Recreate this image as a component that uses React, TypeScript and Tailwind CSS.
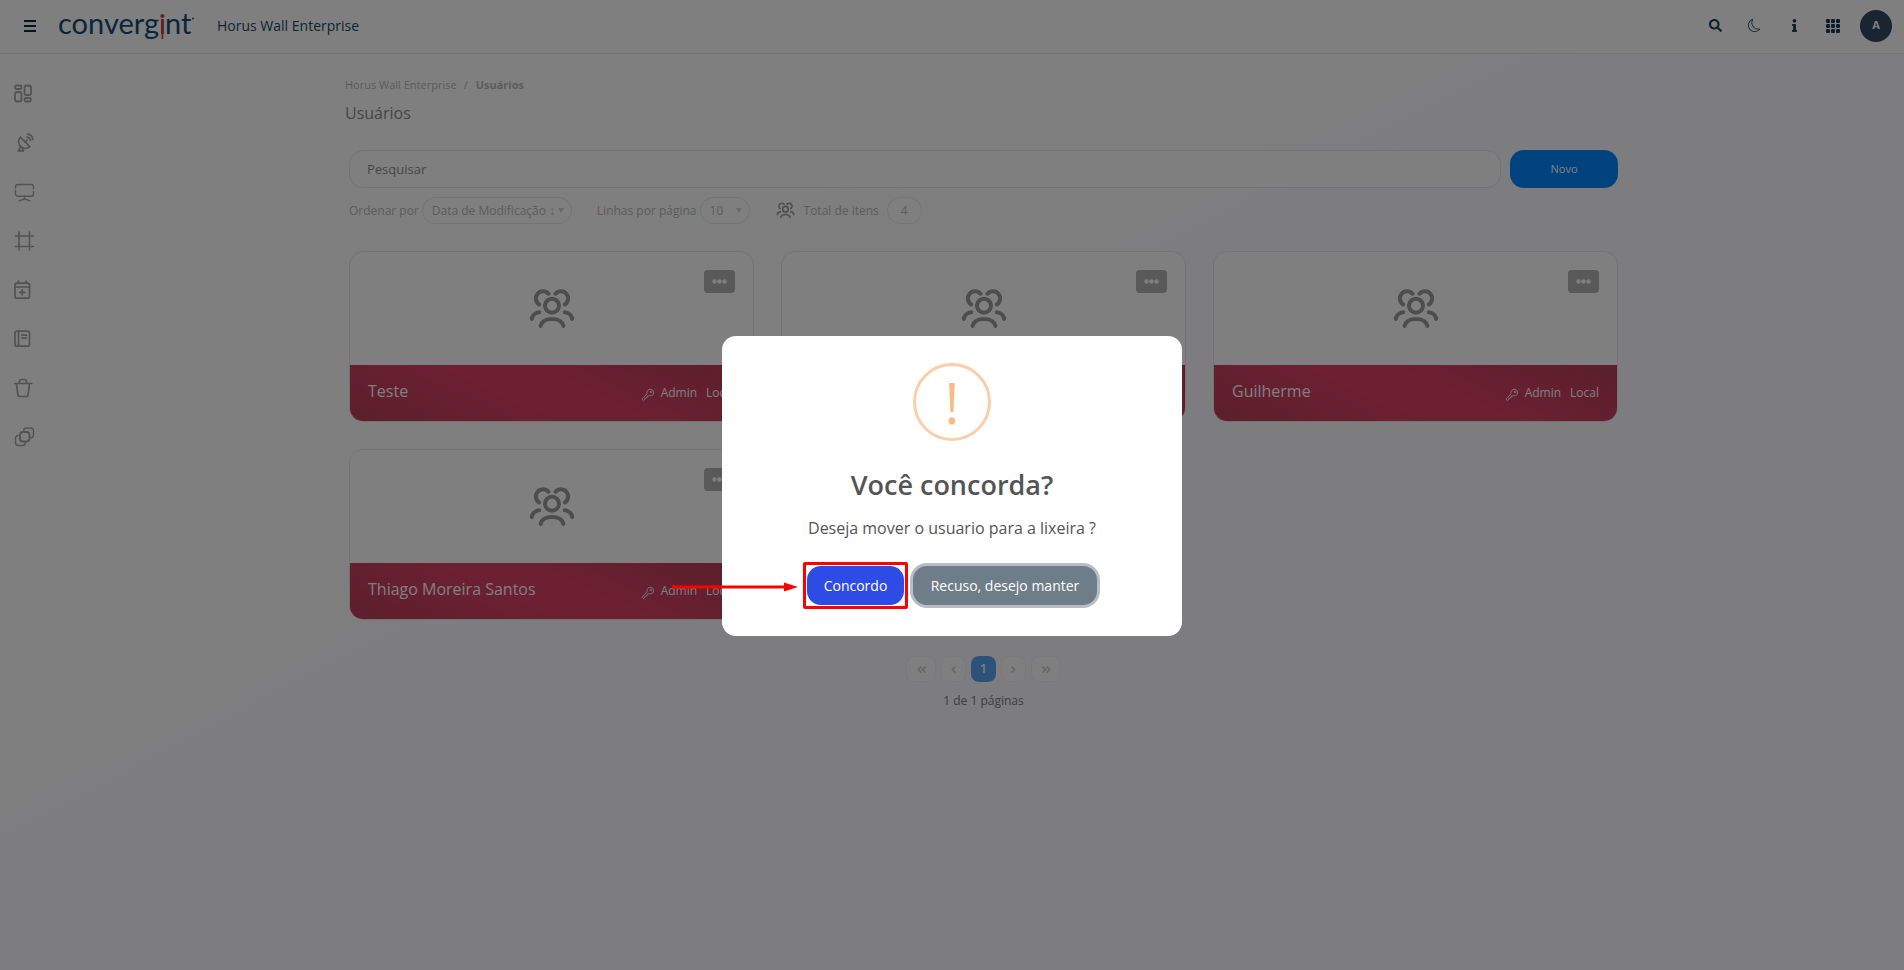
import React from 'react';
import { FaSearch, FaInfo, FaAngleDoubleLeft, FaAngleDoubleRight, FaAngleLeft, FaAngleRight } from 'react-icons/fa';
import { BsMoon, BsFillGrid3X3GapFill } from 'react-icons/bs';
import { IoKeyOutline } from 'react-icons/io5';

interface User {
  name: string;
  role: string;
  origin: string;
}

const users: User[] = [
  { name: 'Teste', role: 'Admin', origin: 'Local' },
  { name: 'Administrador', role: 'Admin', origin: 'Local' },
  { name: 'Guilherme', role: 'Admin', origin: 'Local' },
  { name: 'Thiago Moreira Santos', role: 'Admin', origin: 'Local' },
];

const menu = [
  {
    label: 'Dashboard',
    icon: (
      <g strokeWidth="1.8">
        <rect x="1" y="1.5" width="6.5" height="3.5" rx="1.5" />
        <rect x="1" y="8" width="6.5" height="9.5" rx="2" />
        <rect x="10.5" y="1.5" width="6.5" height="9.5" rx="2" />
        <rect x="10.5" y="14" width="6.5" height="3.5" rx="1.5" />
      </g>
    ),
  },
  {
    label: 'Fontes',
    icon: (
      <g strokeWidth="1.7">
        <path d="M6.3 4.2C3.8 7 4.2 11 6.7 13.4c2.5 2.4 6.4 2.6 9.2.2z" />
        <path d="M11 9l2-2M6.5 13.5L4.8 17.8M4 17.8h5.5M8 14.5l1.5 3" />
        <path d="M13.2 4.2c1.7.3 2.8 1.4 3.1 3.1M13.5 1.2c3 .3 5 2.4 5.3 5.3" />
      </g>
    ),
  },
  {
    label: 'Telas',
    icon: (
      <g strokeWidth="1.4">
        <path d="M1.5 6V5q0-2.5 2.5-2.5h13q2.5 0 2.5 2.5v2M19.5 9.5v2.2q0 2.5-2.5 2.5H4q-2.5 0-2.5-2.5V8.5" />
        <path d="M10.5 14.2v2.5M5 18.8l5.5-2 5.5 2" />
      </g>
    ),
  },
  {
    label: 'Layouts',
    icon: <path strokeWidth="1.6" d="M5 1v18M15.5 1v18M1.5 5h18M1.5 15.5h18" />,
  },
  {
    label: 'Agenda',
    icon: (
      <g strokeWidth="1.7">
        <rect x="1" y="3.2" width="14.5" height="15" rx="2" />
        <path d="M1 7h14.5M4.5 1v2M12 1v2M8.2 9.8v5M5.7 12.3h5" />
      </g>
    ),
  },
  {
    label: 'Registros',
    icon: (
      <g strokeWidth="1.7">
        <rect x="1" y="2.2" width="14.5" height="15" rx="2" />
        <path d="M4.5 2.2v15M8 6.2h4.5M8 9.2h4.5" />
      </g>
    ),
  },
  {
    label: 'Lixeira',
    icon: (
      <g strokeWidth="1.7">
        <path d="M0.8 5.5h17M2.5 5.5l1.3 11q.3 2 2.2 2h6q1.9 0 2.2-2l1.3-11" />
        <path d="M5.5 5V3.5Q5.5 1.5 7.5 1.5h3q2 0 2 2V5" />
      </g>
    ),
  },
  {
    label: 'Grupos',
    icon: (
      <g strokeWidth="1.4">
        <rect x="6" y="5" width="9.5" height="9.5" rx="3" strokeWidth="1.9" />
        <path d="M9.5 3.5q.5-2.5 3-2.5h4q3 0 3 3v4q0 2.5-2.5 3M4 8.5q-2.5.5-2.5 3v4q0 3 3 3h4q2.5 0 3-2.5" />
      </g>
    ),
  },
];

const UsersIcon: React.FC<{ className: string }> = ({ className }) => (
  <svg viewBox="0 0 46 42" className={className} fill="none" stroke="currentColor" strokeWidth="4" strokeLinecap="round" aria-hidden="true">
    <circle cx="23" cy="17.7" r="7" />
    <path d="M11.7 38C12.5 33.5 17.5 31 23 31s10.5 2.5 11.3 7" />
    <path d="M2.8 31c.4-3.6 3.4-6.3 7.5-6.8M43.2 31c-.4-3.6-3.4-6.3-7.5-6.8" />
    <path d="M19.5 5.7A7.2 7.2 0 1 0 10.2 16.5M26.5 5.7A7.2 7.2 0 1 1 35.8 16.5" />
  </svg>
);

const Logo: React.FC = () => (
  <svg width="140" height="42" viewBox="0 -5 140 42" className="overflow-visible" aria-label="convergint">
    <text x="0" y="24" fontFamily="Lato, sans-serif" fontSize="29" fill="#154c74">
      converg<tspan x="101" fill="#c8403c">ı</tspan><tspan x="107">nt</tspan>
    </text>
    <circle cx="104.4" cy="6" r="2.1" fill="#c8403c" />
    <path d="M103.2 10h2.5l-.5 19h-1.5z" fill="#c8403c" />
    <circle cx="135" cy="8.5" r="1" fill="#154c74" />
  </svg>
);

const Header: React.FC = () => (
  <header className="flex h-[54px] items-center border-b border-gray-200 bg-white pr-3 pb-[2px] pl-6 text-[#203c58]">
    <button type="button" aria-label="Menu" className="flex w-3 flex-col gap-[2px]">
      <span className="h-[2px] w-full bg-[#102838]" />
      <span className="mt-px h-[2px] w-full bg-[#102838]" />
      <span className="mt-px h-[2px] w-full bg-[#102838]" />
    </button>
    <a href="#" className="ml-[22px]"><Logo /></a>
    <span className="ml-[19px] text-sm font-medium text-[#1c4668]">Horus Wall Enterprise</span>
    <div className="ml-auto flex items-center">
      <button type="button" aria-label="Buscar" className="mr-[26px]"><FaSearch className="size-[13px]" /></button>
      <button type="button" aria-label="Tema" className="mr-[27px]"><BsMoon className="size-[13px]" /></button>
      <button type="button" aria-label="Informações" className="mr-6"><FaInfo className="size-[13px]" /></button>
      <button type="button" aria-label="Aplicativos" className="mr-[19px]"><BsFillGrid3X3GapFill className="size-4" /></button>
      <button type="button" aria-label="Conta" className="flex size-8 items-center justify-center rounded-full bg-[#324a62] text-[11px] font-bold text-white">A</button>
    </div>
  </header>
);

const UserCard: React.FC<{ user: User }> = ({ user }) => (
  <div className="overflow-hidden rounded-[14px] border border-gray-200 bg-white">
    <div className="relative flex h-[113px] items-center justify-center">
      <UsersIcon className="h-[42px] w-[46px] text-[#9a9a9a]" />
      <button type="button" aria-label={`Opções de ${user.name}`} className="absolute top-[18px] right-[18px] flex h-[23px] w-[31px] items-center justify-center rounded bg-[#b2b2b2] pb-px">
        <svg width="15" height="5" viewBox="0 0 15 5" fill="#fff" aria-hidden="true">
          <circle cx="2.5" cy="2.5" r="2.2" />
          <circle cx="7.5" cy="2.5" r="2.2" />
          <circle cx="12.5" cy="2.5" r="2.2" />
        </svg>
      </button>
    </div>
    <div className="flex h-14 items-center justify-between bg-[linear-gradient(25deg,#b83f58_0%,#d84064_40%,#d84064_58%,#b83f58_95%)] px-[18px] text-white">
      <h2 className="pb-1 text-base">{user.name}</h2>
      <div className="flex items-center text-xs">
        <IoKeyOutline className="mt-1 mr-[6px] size-[14px]" />
        <span className="mr-[9px]">{user.role}</span>
        <span>{user.origin}</span>
      </div>
    </div>
  </div>
);

const Caret = () => <span className="pointer-events-none absolute top-[11px] right-2 border-x-[3px] border-t-[5px] border-x-transparent border-t-[#d4d4d4]" />;

const Filters: React.FC = () => (
  <div className="mt-[9px] flex h-[27px] items-center text-xs text-[#b8b8b8]">
    <label htmlFor="order" className="mr-[3px]">Ordenar por</label>
    <div className="relative">
      <select id="order" className="h-[27px] w-[150px] appearance-none rounded-full border border-gray-200 bg-white pl-[9px]">
        <option>Data de Modificação ↓</option>
      </select>
      <Caret />
    </div>
    <label htmlFor="rows" className="mr-[3px] ml-[25px]">Linhas por página</label>
    <div className="relative">
      <select id="rows" className="h-[27px] w-[50px] appearance-none rounded-full border border-gray-200 bg-white pl-[9px]">
        <option>10</option>
      </select>
      <Caret />
    </div>
    <UsersIcon className="mr-[9px] ml-[26px] h-[17px] w-[19px] text-[#9a9a9a]" />
    <span>Total de itens</span>
    <span className="ml-2 flex h-[27px] w-[35px] items-center justify-center rounded-full border border-gray-200 bg-white">4</span>
  </div>
);

const Pagination: React.FC = () => (
  <nav aria-label="Paginação" className="mt-9 flex flex-col items-center">
    <div className="flex gap-[5px] text-[11px] text-[#cacaca]">
      <button type="button" aria-label="Primeira" className="flex h-[26px] w-[30px] items-center justify-center rounded-lg border border-gray-100 bg-white"><FaAngleDoubleLeft /></button>
      <button type="button" aria-label="Anterior" className="flex h-[26px] w-[25px] items-center justify-center rounded-lg border border-gray-100 bg-white"><FaAngleLeft /></button>
      <button type="button" className="flex h-[26px] w-[25px] items-center justify-center rounded-lg bg-[#5ba4f4] text-xs font-semibold text-white">1</button>
      <button type="button" aria-label="Próxima" className="flex h-[26px] w-[25px] items-center justify-center rounded-lg border border-gray-100 bg-white"><FaAngleRight /></button>
      <button type="button" aria-label="Última" className="flex h-[26px] w-[30px] items-center justify-center rounded-lg border border-gray-100 bg-white"><FaAngleDoubleRight /></button>
    </div>
    <p className="mt-[11px] text-xs text-[#7c7c7c]">1 de 1 páginas</p>
  </nav>
);

const ConfirmModal: React.FC = () => (
  <div className="fixed inset-0 flex items-center justify-center bg-black/50">
    <div role="dialog" aria-labelledby="confirm-title" className="mt-[2px] flex h-[300px] w-[460px] flex-col items-center rounded-[14px] bg-white pt-[27px]">
      <div className="flex size-[78px] items-center justify-center rounded-full border-[3px] border-[#facea8] text-[56px] leading-none text-[#f8bb86]">!</div>
      <h2 id="confirm-title" className="mt-[25px] text-[27px] leading-[38px] font-semibold text-[#545454]">Você concorda?</h2>
      <p className="mt-3 text-base text-[#545454]">Deseja mover o usuario para a lixeira ?</p>
      <div className="mt-[26px] flex gap-[9px] text-sm font-medium text-white">
        <div className="relative">
          <button type="button" className="h-[39px] w-[97px] rounded-[14px] bg-[#2f4be6]">Concordo</button>
          <div className="pointer-events-none absolute -inset-1 rounded-xs border-[3px] border-[#ff0000]" />
          <svg width="126" height="10" viewBox="0 0 126 10" className="absolute top-4 right-full mr-[9px]" aria-hidden="true">
            <path d="M0 3.5h112V0.5l14 4.5-14 4.5V6.5H0z" fill="#ff0000" />
          </svg>
        </div>
        <button type="button" className="h-[39px] w-[184px] rounded-[14px] bg-[#6e7d88] ring-3 ring-[#b6bec4]">Recuso, desejo manter</button>
      </div>
    </div>
  </div>
);

const App: React.FC = () => {
  return (
    <div className="min-h-screen bg-linear-to-br from-white from-25% to-[#fafafe] to-50% font-['Open_Sans',sans-serif]">
      <Header />
      <div className="flex">
        <aside className="w-[63px] shrink-0 pt-[15px] pl-[14px] text-[#a4a4a4]">
          <nav>
            {menu.map((item) => (
              <a key={item.label} href="#" aria-label={item.label} className="flex h-[49px] items-center">
                <svg width="21" height="20" viewBox="0 0 21 20" fill="none" stroke="currentColor" strokeLinecap="round" strokeLinejoin="round">{item.icon}</svg>
              </a>
            ))}
          </nav>
        </aside>
        <main className="mx-auto w-full max-w-[1269px] pt-[23px]">
          <div className="-ml-1">
            <nav aria-label="Breadcrumb" className="flex text-[11px] leading-4 text-[#b8b8b8]">
              <a href="#">Horus Wall Enterprise</a>
              <span className="mr-2 ml-[7px]">/</span>
              <span className="font-bold">Usuários</span>
            </nav>
            <h1 className="mt-2 text-base text-[#8c8c8c]">Usuários</h1>
          </div>
          <div className="mt-[25px] flex gap-[9px]">
            <input type="text" aria-label="Pesquisar" placeholder="Pesquisar" className="h-[38px] min-w-0 flex-1 rounded-[14px] border border-gray-200 bg-white px-[17px] text-[13px] placeholder:text-[#8c8c8c]" />
            <button type="button" className="h-[38px] w-[108px] rounded-[14px] bg-[#0086ff] text-[11px] text-white">Novo</button>
          </div>
          <Filters />
          <div className="mt-[27px] grid grid-cols-3 gap-[27px]">
            {users.map((user) => (
              <UserCard key={user.name} user={user} />
            ))}
          </div>
          <Pagination />
        </main>
      </div>
      <ConfirmModal />
    </div>
  );
};

export default App;
